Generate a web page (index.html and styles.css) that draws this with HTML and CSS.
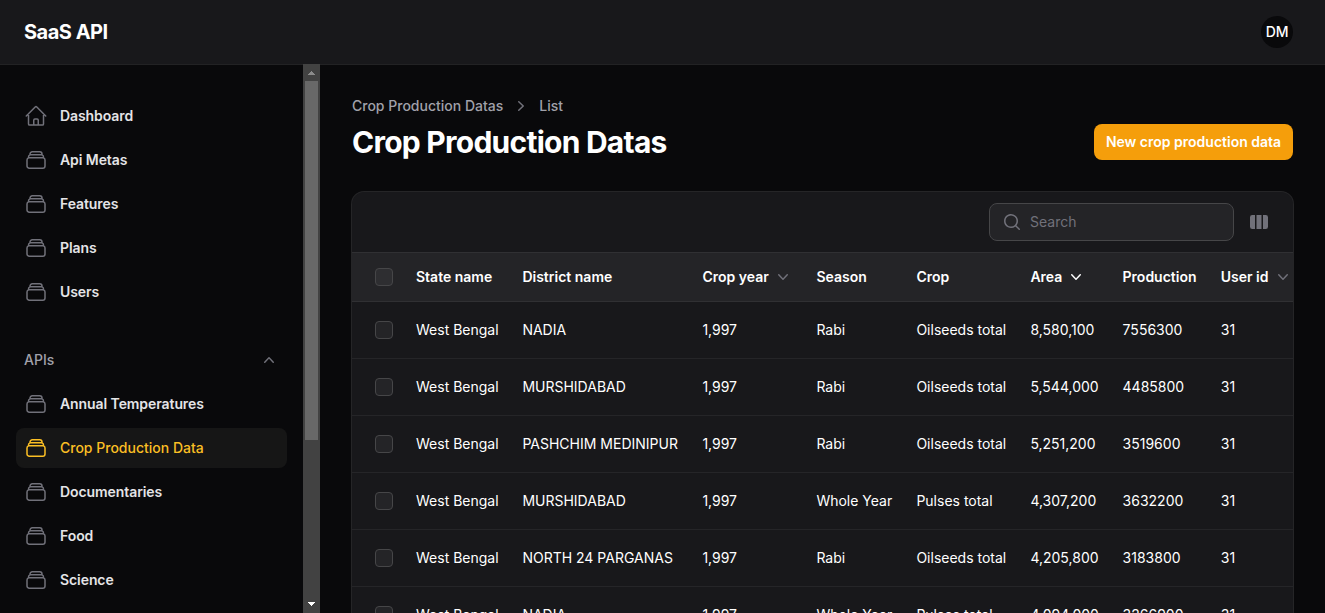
FILE: index.html
```html
<!DOCTYPE html>
<html lang="en">
<head>
<meta charset="utf-8">
<title>Crop Production Datas - SaaS API</title>
<link rel="stylesheet" href="styles.css">
</head>
<body>
<svg class="sprite" aria-hidden="true">
  <symbol id="home" viewBox="0 0 24 24"><path d="M2.25 12l8.954-8.955c.44-.439 1.152-.439 1.591 0L21.75 12M4.5 9.75v10.125c0 .621.504 1.125 1.125 1.125H9.75v-4.875c0-.621.504-1.125 1.125-1.125h2.25c.621 0 1.125.504 1.125 1.125V21h4.125c.621 0 1.125-.504 1.125-1.125V9.75M8.25 21h8.25"/></symbol>
  <symbol id="stack" viewBox="0 0 24 24"><path d="M6 6.878V6a2.25 2.25 0 012.25-2.25h7.5A2.25 2.25 0 0118 6v.878m-12 0c.235-.083.487-.128.75-.128h10.5c.263 0 .515.045.75.128m-12 0A2.25 2.25 0 004.5 9v.878m13.5-3A2.25 2.25 0 0119.5 9v.878m0 0a2.246 2.246 0 00-.75-.128H5.25c-.263 0-.515.045-.75.128m15 0A2.25 2.25 0 0121 12v6a2.25 2.25 0 01-2.25 2.25H5.25A2.25 2.25 0 013 18v-6c0-.98.626-1.813 1.5-2.122"/></symbol>
  <symbol id="down" viewBox="0 0 20 20"><path d="M5.23 7.21a.75.75 0 011.06.02L10 11.168l3.71-3.938a.75.75 0 111.08 1.04l-4.25 4.5a.75.75 0 01-1.08 0l-4.25-4.5a.75.75 0 01.02-1.06z"/></symbol>
  <symbol id="up" viewBox="0 0 20 20"><path d="M14.77 12.79a.75.75 0 01-1.06-.02L10 8.832 6.29 12.77a.75.75 0 11-1.08-1.04l4.25-4.5a.75.75 0 011.08 0l4.25 4.5a.75.75 0 01-.02 1.06z"/></symbol>
  <symbol id="right" viewBox="0 0 20 20"><path d="M7.21 14.77a.75.75 0 01.02-1.06L11.168 10 7.23 6.29a.75.75 0 111.04-1.08l4.5 4.25a.75.75 0 010 1.08l-4.5 4.25a.75.75 0 01-1.06-.02z"/></symbol>
  <symbol id="search" viewBox="0 0 20 20"><path d="M9 3.5a5.5 5.5 0 100 11 5.5 5.5 0 000-11zM2 9a7 7 0 1112.452 4.391l3.328 3.329a.75.75 0 11-1.06 1.06l-3.329-3.328A7 7 0 012 9z"/></symbol>
  <symbol id="columns" viewBox="0 0 20 20"><path d="M14 17h2.75A2.25 2.25 0 0019 14.75v-9.5A2.25 2.25 0 0016.75 3H14v14zM12.5 3h-5v14h5V3zM3.25 3H6v14H3.25A2.25 2.25 0 011 14.75v-9.5A2.25 2.25 0 013.25 3z"/></symbol>
</svg>

<div class="app">
  <header class="topbar">
    <div class="brand">SaaS API</div>
    <div class="avatar">DM</div>
  </header>

  <div class="body">
    <aside class="sidebar">
      <nav class="nav">
        <a class="item"><svg class="line"><use href="#home"/></svg>Dashboard</a>
        <a class="item"><svg class="line"><use href="#stack"/></svg>Api Metas</a>
        <a class="item"><svg class="line"><use href="#stack"/></svg>Features</a>
        <a class="item"><svg class="line"><use href="#stack"/></svg>Plans</a>
        <a class="item"><svg class="line"><use href="#stack"/></svg>Users</a>
        <div class="group">APIs<svg class="solid"><use href="#up"/></svg></div>
        <a class="item"><svg class="line"><use href="#stack"/></svg>Annual Temperatures</a>
        <a class="item active"><svg class="line"><use href="#stack"/></svg>Crop Production Data</a>
        <a class="item"><svg class="line"><use href="#stack"/></svg>Documentaries</a>
        <a class="item"><svg class="line"><use href="#stack"/></svg>Food</a>
        <a class="item"><svg class="line"><use href="#stack"/></svg>Science</a>
      </nav>
      <div class="scrollbar">
        <svg class="arrow" viewBox="0 0 17 17" shape-rendering="crispEdges"><path fill="#8b8b8b" d="M8 7h1v1h1v1h1v1h1v1H5v-1h1V9h1V8h1z"/></svg>
        <div class="thumb"></div>
        <svg class="arrow end" viewBox="0 0 17 17" shape-rendering="crispEdges"><path fill="#fff" d="M5 6h7v1h-1v1h-1v1H9v1H8V9H7V8H6V7H5z"/></svg>
      </div>
    </aside>

    <main class="main">
      <div class="heading">
        <div>
          <div class="crumbs"><span>Crop Production Datas</span><svg class="solid"><use href="#right"/></svg><span>List</span></div>
          <h1>Crop Production Datas</h1>
        </div>
        <button class="create">New crop production data</button>
      </div>

      <section class="card">
        <div class="toolbar">
          <label class="search"><svg class="solid"><use href="#search"/></svg><input type="text" placeholder="Search"></label>
          <svg class="solid"><use href="#columns"/></svg>
        </div>
        <table>
          <colgroup><col class="c-check"><col class="c-state"><col class="c-district"><col class="c-year"><col class="c-season"><col class="c-crop"><col class="c-area"><col class="c-prod"><col class="c-user"></colgroup>
          <thead>
            <tr>
              <th><i class="box"></i></th><th>State name</th><th>District name</th>
              <th><span class="sort">Crop year<svg class="solid"><use href="#down"/></svg></span></th>
              <th>Season</th><th>Crop</th>
              <th><span class="sort on">Area<svg class="solid"><use href="#down"/></svg></span></th>
              <th>Production</th>
              <th><span class="sort">User id<svg class="solid"><use href="#down"/></svg></span></th>
            </tr>
          </thead>
          <tbody>
            <tr><td><i class="box"></i></td><td>West Bengal</td><td>NADIA</td><td>1,997</td><td>Rabi</td><td>Oilseeds total</td><td>8,580,100</td><td>7556300</td><td>31</td></tr>
            <tr><td><i class="box"></i></td><td>West Bengal</td><td>MURSHIDABAD</td><td>1,997</td><td>Rabi</td><td>Oilseeds total</td><td>5,544,000</td><td>4485800</td><td>31</td></tr>
            <tr><td><i class="box"></i></td><td>West Bengal</td><td>PASHCHIM MEDINIPUR</td><td>1,997</td><td>Rabi</td><td>Oilseeds total</td><td>5,251,200</td><td>3519600</td><td>31</td></tr>
            <tr><td><i class="box"></i></td><td>West Bengal</td><td>MURSHIDABAD</td><td>1,997</td><td>Whole Year</td><td>Pulses total</td><td>4,307,200</td><td>3632200</td><td>31</td></tr>
            <tr><td><i class="box"></i></td><td>West Bengal</td><td>NORTH 24 PARGANAS</td><td>1,997</td><td>Rabi</td><td>Oilseeds total</td><td>4,205,800</td><td>3183800</td><td>31</td></tr>
            <tr><td><i class="box"></i></td><td>West Bengal</td><td>NADIA</td><td>1,997</td><td>Whole Year</td><td>Pulses total</td><td>4,094,000</td><td>3266900</td><td>31</td></tr>
          </tbody>
        </table>
      </section>
    </main>
  </div>
</div>
</body>
</html>
```

FILE: styles.css
```css
* { box-sizing: border-box; }
body { margin: 0; background: #09090b; color: #fff; font: 14px/20px Inter, "Liberation Sans", sans-serif; }
svg { flex: none; }
.sprite { display: none; }
.solid { width: 20px; height: 20px; fill: currentColor; color: #71717a; }
.line { width: 24px; height: 24px; fill: none; stroke: #71717a; stroke-width: 1.5; stroke-linecap: round; stroke-linejoin: round; }

.app { height: 613px; display: flex; flex-direction: column; overflow: hidden; }
.topbar { height: 64px; flex: none; display: flex; align-items: center; justify-content: space-between; padding: 0 32px 0 24px; background: #18181b; box-shadow: 0 1px 0 #222224; }
.brand { font-size: 20px; font-weight: 700; letter-spacing: -0.5px; }
.avatar { width: 32px; height: 32px; border-radius: 50%; background: #09090b; display: grid; place-items: center; font-size: 14px; font-weight: 500; letter-spacing: -0.2px; }

.body { flex: 1; min-height: 0; display: flex; }
.sidebar { width: 320px; flex: none; display: flex; }
.nav { flex: 1; padding: 32px 16px 0; display: flex; flex-direction: column; gap: 4px; overflow: hidden; }
.item { height: 40px; flex: none; display: flex; align-items: center; gap: 12px; padding: 0 8px; border-radius: 8px; color: #e4e4e7; font-weight: 600; letter-spacing: -0.08px; }
.item.active { background: #161616; color: #fbbf24; font-weight: 500; letter-spacing: 0; }
.active .line { stroke: #fbbf24; }
.group { height: 40px; flex: none; margin-top: 24px; padding: 0 8px; display: flex; align-items: center; justify-content: space-between; color: #a1a1aa; font-weight: 500; }
.scrollbar { width: 17px; z-index: 1; background: #424242; display: flex; flex-direction: column; align-items: center; }
.arrow { width: 17px; height: 17px; }
.arrow.end { margin-top: auto; }
.thumb { width: 13px; height: 359px; background: #686868; }

.main { flex: 1; min-width: 0; padding: 32px 32px 0; }
.heading { height: 64px; display: flex; align-items: center; justify-content: space-between; margin-bottom: 32px; }
.crumbs { display: flex; align-items: center; gap: 8px; height: 20px; color: #a1a1aa; font-weight: 500; }
h1 { margin: 8px 0 0; font-size: 30px; line-height: 36px; font-weight: 700; letter-spacing: -0.75px; }
.create { align-self: flex-end; height: 36px; width: 199px; padding: 0; border: 0; border-radius: 8px; background: #f59e0b; color: #fff; font: 600 14px/20px Inter, sans-serif; white-space: nowrap; }

.card { height: 600px; background: #18181b; border-radius: 12px; box-shadow: 0 0 0 1px #252527; overflow: hidden; }
.toolbar { height: 60px; display: flex; align-items: center; justify-content: flex-end; gap: 15px; padding-right: 24px; }
.search { width: 245px; height: 38px; display: flex; align-items: center; gap: 8px; padding: 0 12px; border: 1px solid #464648; border-radius: 8px; background: #242427; }
.search input { width: 100%; min-width: 0; padding: 0; border: 0; outline: 0; background: none; color: #fff; font: 14px/20px Inter, sans-serif; }
.search input::placeholder { color: #71717a; opacity: 1; }

table { width: 941px; table-layout: fixed; border-collapse: separate; border-spacing: 0; }
.c-check { width: 52px; }
.c-state { width: 106.4px; }
.c-district { width: 180px; }
.c-year { width: 114px; }
.c-season { width: 100px; }
.c-crop { width: 114px; }
.c-area { width: 92.2px; }
.c-prod { width: 98.2px; }
.c-user { width: 84.2px; }
th, td { padding: 0 12px; text-align: left; white-space: nowrap; border-top: 1px solid #252528; }
th { height: 49px; background: #242427; font-weight: 600; border-color: #303033; }
td { height: 57px; font-weight: 400; }
tbody tr:first-child td { border-color: #303033; }
th:first-child, td:first-child { padding: 0 0 0 23px; }
.box { display: block; width: 18px; height: 18px; border: 1px solid #464648; border-radius: 4px; background: #242427; }
th .box { background: #2e2e31; }
.sort { display: flex; align-items: center; gap: 4px; }
.on .solid { color: #fff; }
```
